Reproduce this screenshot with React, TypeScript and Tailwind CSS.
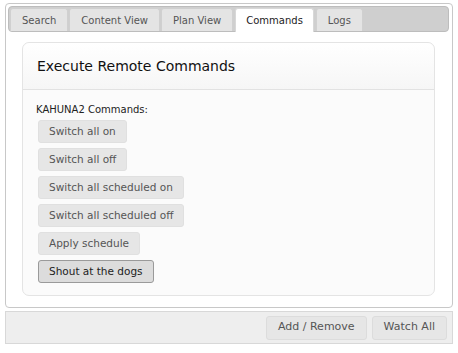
import { FC } from 'react';

const tabs = ['Search', 'Content View', 'Plan View', 'Commands', 'Logs'];
const commands = [
  'Switch all on',
  'Switch all off',
  'Switch all scheduled on',
  'Switch all scheduled off',
  'Apply schedule',
  'Shout at the dogs',
];

const App: FC = () => {
  return (
    <div className="w-[458px] h-[353px] bg-white px-[5px] pt-[3px] font-['DejaVu_Sans',sans-serif] text-[10px]">
      <div className="border border-[#c8c8c8] rounded-[4px] bg-white p-[2px] pr-[3px] pb-[11px]">
        <div className="flex items-end gap-[1px] bg-[#cfcfcf] border border-[#bdbdbd] rounded-[4px] h-[26px] px-[1px]">
          {tabs.map((tab) => (
            <div
              key={tab}
              className={
                tab === 'Commands'
                  ? 'h-[24px] px-[10px] mx-[1px] flex items-center bg-white text-[#222] rounded-t-[3px] border border-b-0 border-[#d8d8d8] -mb-px'
                  : 'h-[23px] px-[11px] flex items-center bg-[#e4e4e4] text-[#555] rounded-t-[3px] border border-b-0 border-[#d0d0d0]'
              }
            >
              {tab}
            </div>
          ))}
        </div>
        <div className="mx-[14px] mt-[10px] border border-[#e4e4e4] rounded-[7px] bg-[#fbfbfb]">
          <div className="h-[47px] flex items-center px-[14px] border-b border-[#e2e2e2] bg-gradient-to-b from-white to-[#f6f6f6] rounded-t-[7px] text-[14px] text-[#111]">
            Execute Remote Commands
          </div>
          <div className="px-[13px] pt-[12px] pb-[12px]">
            <div className="text-[#222] leading-[15px] mb-[3px]">KAHUNA2 Commands:</div>
            <div className="flex flex-col items-start gap-[5px] pl-[2px]">
              {commands.map((c) => (
                <button
                  key={c}
                  className={
                    c === 'Shout at the dogs'
                      ? 'h-[23px] px-[10px] rounded-[3px] border border-[#9a9a9a] bg-[#dcdcdc] text-[10.5px] text-[#222]'
                      : 'h-[23px] px-[10px] rounded-[3px] border border-[#e0e0e0] bg-[#e6e6e6] text-[10.5px] text-[#555]'
                  }
                >
                  {c}
                </button>
              ))}
            </div>
          </div>
        </div>
      </div>
      <div className="mt-[3px] h-[33px] border border-[#d8d8d8] bg-[#eeeeee] flex items-center justify-end gap-[5px] pr-[5px]">
        <button className="h-[24px] px-[11px] rounded-[3px] border border-[#dcdcdc] bg-[#e6e6e6] text-[11px] text-[#555]">
          Add / Remove
        </button>
        <button className="h-[24px] px-[11px] rounded-[3px] border border-[#dcdcdc] bg-[#e6e6e6] text-[11px] text-[#555]">
          Watch All
        </button>
      </div>
    </div>
  );
};

export default App;
